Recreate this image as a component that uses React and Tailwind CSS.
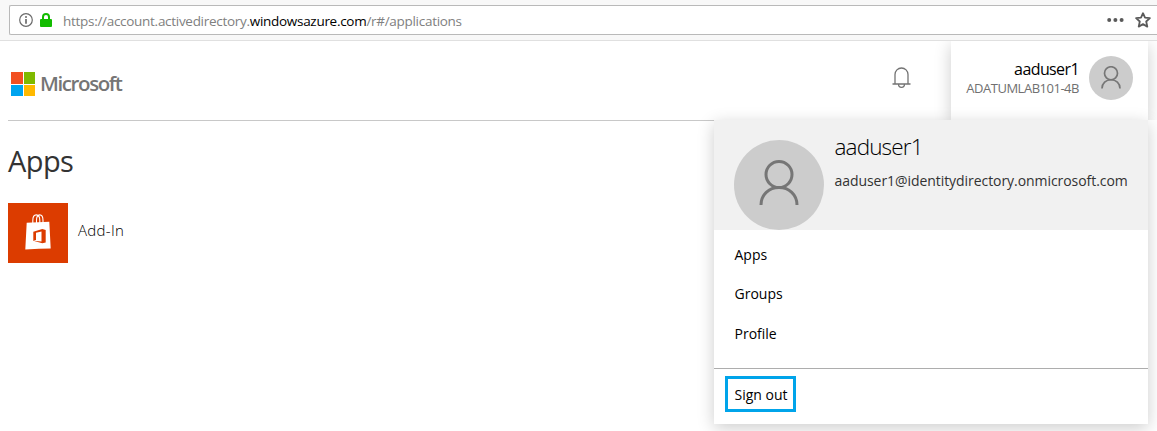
import React from "react";

function PersonIcon({ className, stroke }) {
  return (
    <svg viewBox="0 0 40 46" className={className} fill="none" stroke="#767676" strokeWidth={stroke}>
      <circle cx="20" cy="14.500" r="13" />
      <path d="M2 45C2 34.500 10 27.500 20 27.500s18 7 18 17.500" />
    </svg>
  );
}

function AddressBar() {
  return (
    <div className="flex h-[41px] shrink-0 border-b border-[#e0e0e0] bg-[#f8f8f8] pt-[5px] pl-[9px]">
      <div className="flex h-[30px] flex-1 items-center rounded-l-[2px] border border-r-0 border-[#b9b9b9] bg-white pr-[6px] pl-[9px]">
        <svg viewBox="0 0 14 14" className="h-[14px] w-[14px]" fill="none">
          <circle cx="7" cy="7" r="6.300" stroke="#6b6b6b" strokeWidth="1.200" />
          <circle cx="7" cy="3.900" r="1" fill="#6b6b6b" />
          <path d="M7 6v4.700" stroke="#6b6b6b" strokeWidth="1.700" />
        </svg>
        <svg viewBox="0 0 12 14" className="ml-[7px] h-[14px] w-[12px]">
          <path d="M3 7V4a3 3 0 0 1 6 0v3" fill="none" stroke="#12bc00" strokeWidth="2" />
          <rect x="0" y="6" width="12" height="8" rx="1" fill="#12bc00" />
        </svg>
        <div className="mt-[2px] ml-[11px] flex-1 text-[13.500px] leading-[20px] tracking-[-0.290px] whitespace-pre text-[#808080]">
          https://account.activedirectory.<span className="text-black">windowsazure.com</span>/r#/applications
        </div>
        <svg viewBox="0 0 17 4" className="h-[4px] w-[17px]" fill="#5a5a5a">
          <circle cx="2.200" cy="2" r="2" />
          <circle cx="8.400" cy="2" r="2" />
          <circle cx="14.600" cy="2" r="2" />
        </svg>
        <svg viewBox="0 0 16 16" className="ml-[11px] h-[16px] w-[16px]" fill="none" stroke="#5a5a5a" strokeWidth="1.800" strokeLinejoin="round">
          <path d="M8 1.200l2 4.500 4.900.5-3.700 3.300 1.100 5.100L8 12.100l-4.300 2.500 1.100-5.100L1.100 6.200 6 5.700z" />
        </svg>
      </div>
    </div>
  );
}

function Header() {
  return (
    <header className="ml-[8px] flex h-[80px] w-[1140px] shrink-0 border-b border-[#c8c8c8]">
      <div className="flex flex-1 items-start pt-[29px] pl-[3px]">
        <div className="mt-[2px] grid h-[24px] w-[24px] grid-cols-2 gap-[1px]">
          <div className="bg-[#f25022]" />
          <div className="bg-[#7fba00]" />
          <div className="bg-[#00a4ef]" />
          <div className="bg-[#ffb900]" />
        </div>
        <div className="ml-[5px] text-[20.500px] leading-[26px] font-semibold tracking-[-1.400px] text-[#757575]">Microsoft</div>
      </div>
      <svg viewBox="0 0 20 22" className="mt-[26px] mr-[40px] h-[22px] w-[20px]" fill="none" stroke="#737373" strokeWidth="1.300">
        <path d="M1.500 17h18M4 17V7.500a6.500 6.500 0 0 1 13 0V17M7.500 17a3 3.300 0 0 0 6 0" />
      </svg>
      <div className="flex h-[79px] w-[197px] justify-end bg-white pt-[15px] pr-[15px] shadow-[0_4px_16px_rgba(0,0,0,0.2)] [clip-path:inset(0_-20px_0_-20px)]">
        <div className="text-right">
          <div className="mt-[3px] text-[16px] leading-[20px] tracking-[-0.600px] text-black">aaduser1</div>
          <div className="text-[13px] leading-[18px] tracking-[-0.480px] text-[#707070]">ADATUMLAB101-4B</div>
        </div>
        <div className="ml-[10px] flex h-[44px] w-[44px] items-center justify-center rounded-full bg-[#cccccc]">
          <PersonIcon className="mb-[2px] h-[23px] w-[20px]" stroke="3.400" />
        </div>
      </div>
    </header>
  );
}

function AppStoreIcon() {
  return (
    <div className="flex h-[60px] w-[60px] items-center justify-center bg-[#dc3c00]">
      <svg viewBox="0 0 60 60" className="h-[60px] w-[60px]">
        <path d="M18.700 19.700L41.300 18.700l1.400 26.800-11.700.2-13.700.8z" fill="#fff" />
        <path d="M24.800 20v-2.500c0-7.500 7-7.500 7 0V20M28.500 20v-2.500c0-7.500 6.500-7.500 6.500 0V20" fill="none" stroke="#fff" strokeWidth="1.100" />
        <path d="M25.300 28.800l9-2.800 3.400.9v12.500l-3.400.9-9-2.600 8.200.7V28.600l-5.500 1.100v7.200l-2.700 1z" fill="#dc3c00" />
      </svg>
    </div>
  );
}

function AccountMenu() {
  return (
    <div className="absolute top-[120px] left-[714px] h-[304px] w-[434px] bg-white text-[14px] leading-[20px] text-black shadow-[0_4px_16px_rgba(0,0,0,0.2)]">
      <div className="flex h-[110px] bg-[#f1f1f1] pt-[20px] pl-[20px]">
        <div className="flex h-[90px] w-[90px] items-center justify-center rounded-full bg-[#cccccc]">
          <PersonIcon className="mt-[-4px] h-[46px] w-[40px]" stroke="3" />
        </div>
        <div className="ml-[10.500px]">
          <div className="mt-[-9px] text-[22.500px] leading-[32px] font-light tracking-[-0.850px]">aaduser1</div>
          <div className="mt-[8px] tracking-[-0.060px] text-[#333333]">aaduser1@identitydirectory.onmicrosoft.com</div>
        </div>
      </div>
      <nav className="flex h-[139px] flex-col border-b border-[#adadad] pt-[15px] pl-[20.500px]">
        <a className="mb-[19px]">Apps</a>
        <a className="mb-[20px]">Groups</a>
        <a>Profile</a>
      </nav>
      <button className="mt-[7px] ml-[11px] flex h-[36px] w-[71px] items-center justify-center border-[3px] border-[#00a4ea] pt-[2px] pl-[1px] whitespace-nowrap">
        Sign out
      </button>
    </div>
  );
}

export default function App() {
  return (
    <div className="relative flex h-[431px] w-[1157px] flex-col overflow-hidden bg-white font-['Open_Sans','Noto_Sans',sans-serif]">
      <AddressBar />
      <Header />
      <main className="pt-[18px] pl-[8px]">
        <h1 className="text-[29px] leading-[44px] tracking-[-0.600px] text-[#333333]">Apps</h1>
        <div className="mt-[20px] flex">
          <AppStoreIcon />
          <div className="mt-[17px] ml-[10px] text-[15px] leading-[20px] font-light tracking-[0.300px] text-black">Add-In</div>
        </div>
      </main>
      <AccountMenu />
    </div>
  );
}
